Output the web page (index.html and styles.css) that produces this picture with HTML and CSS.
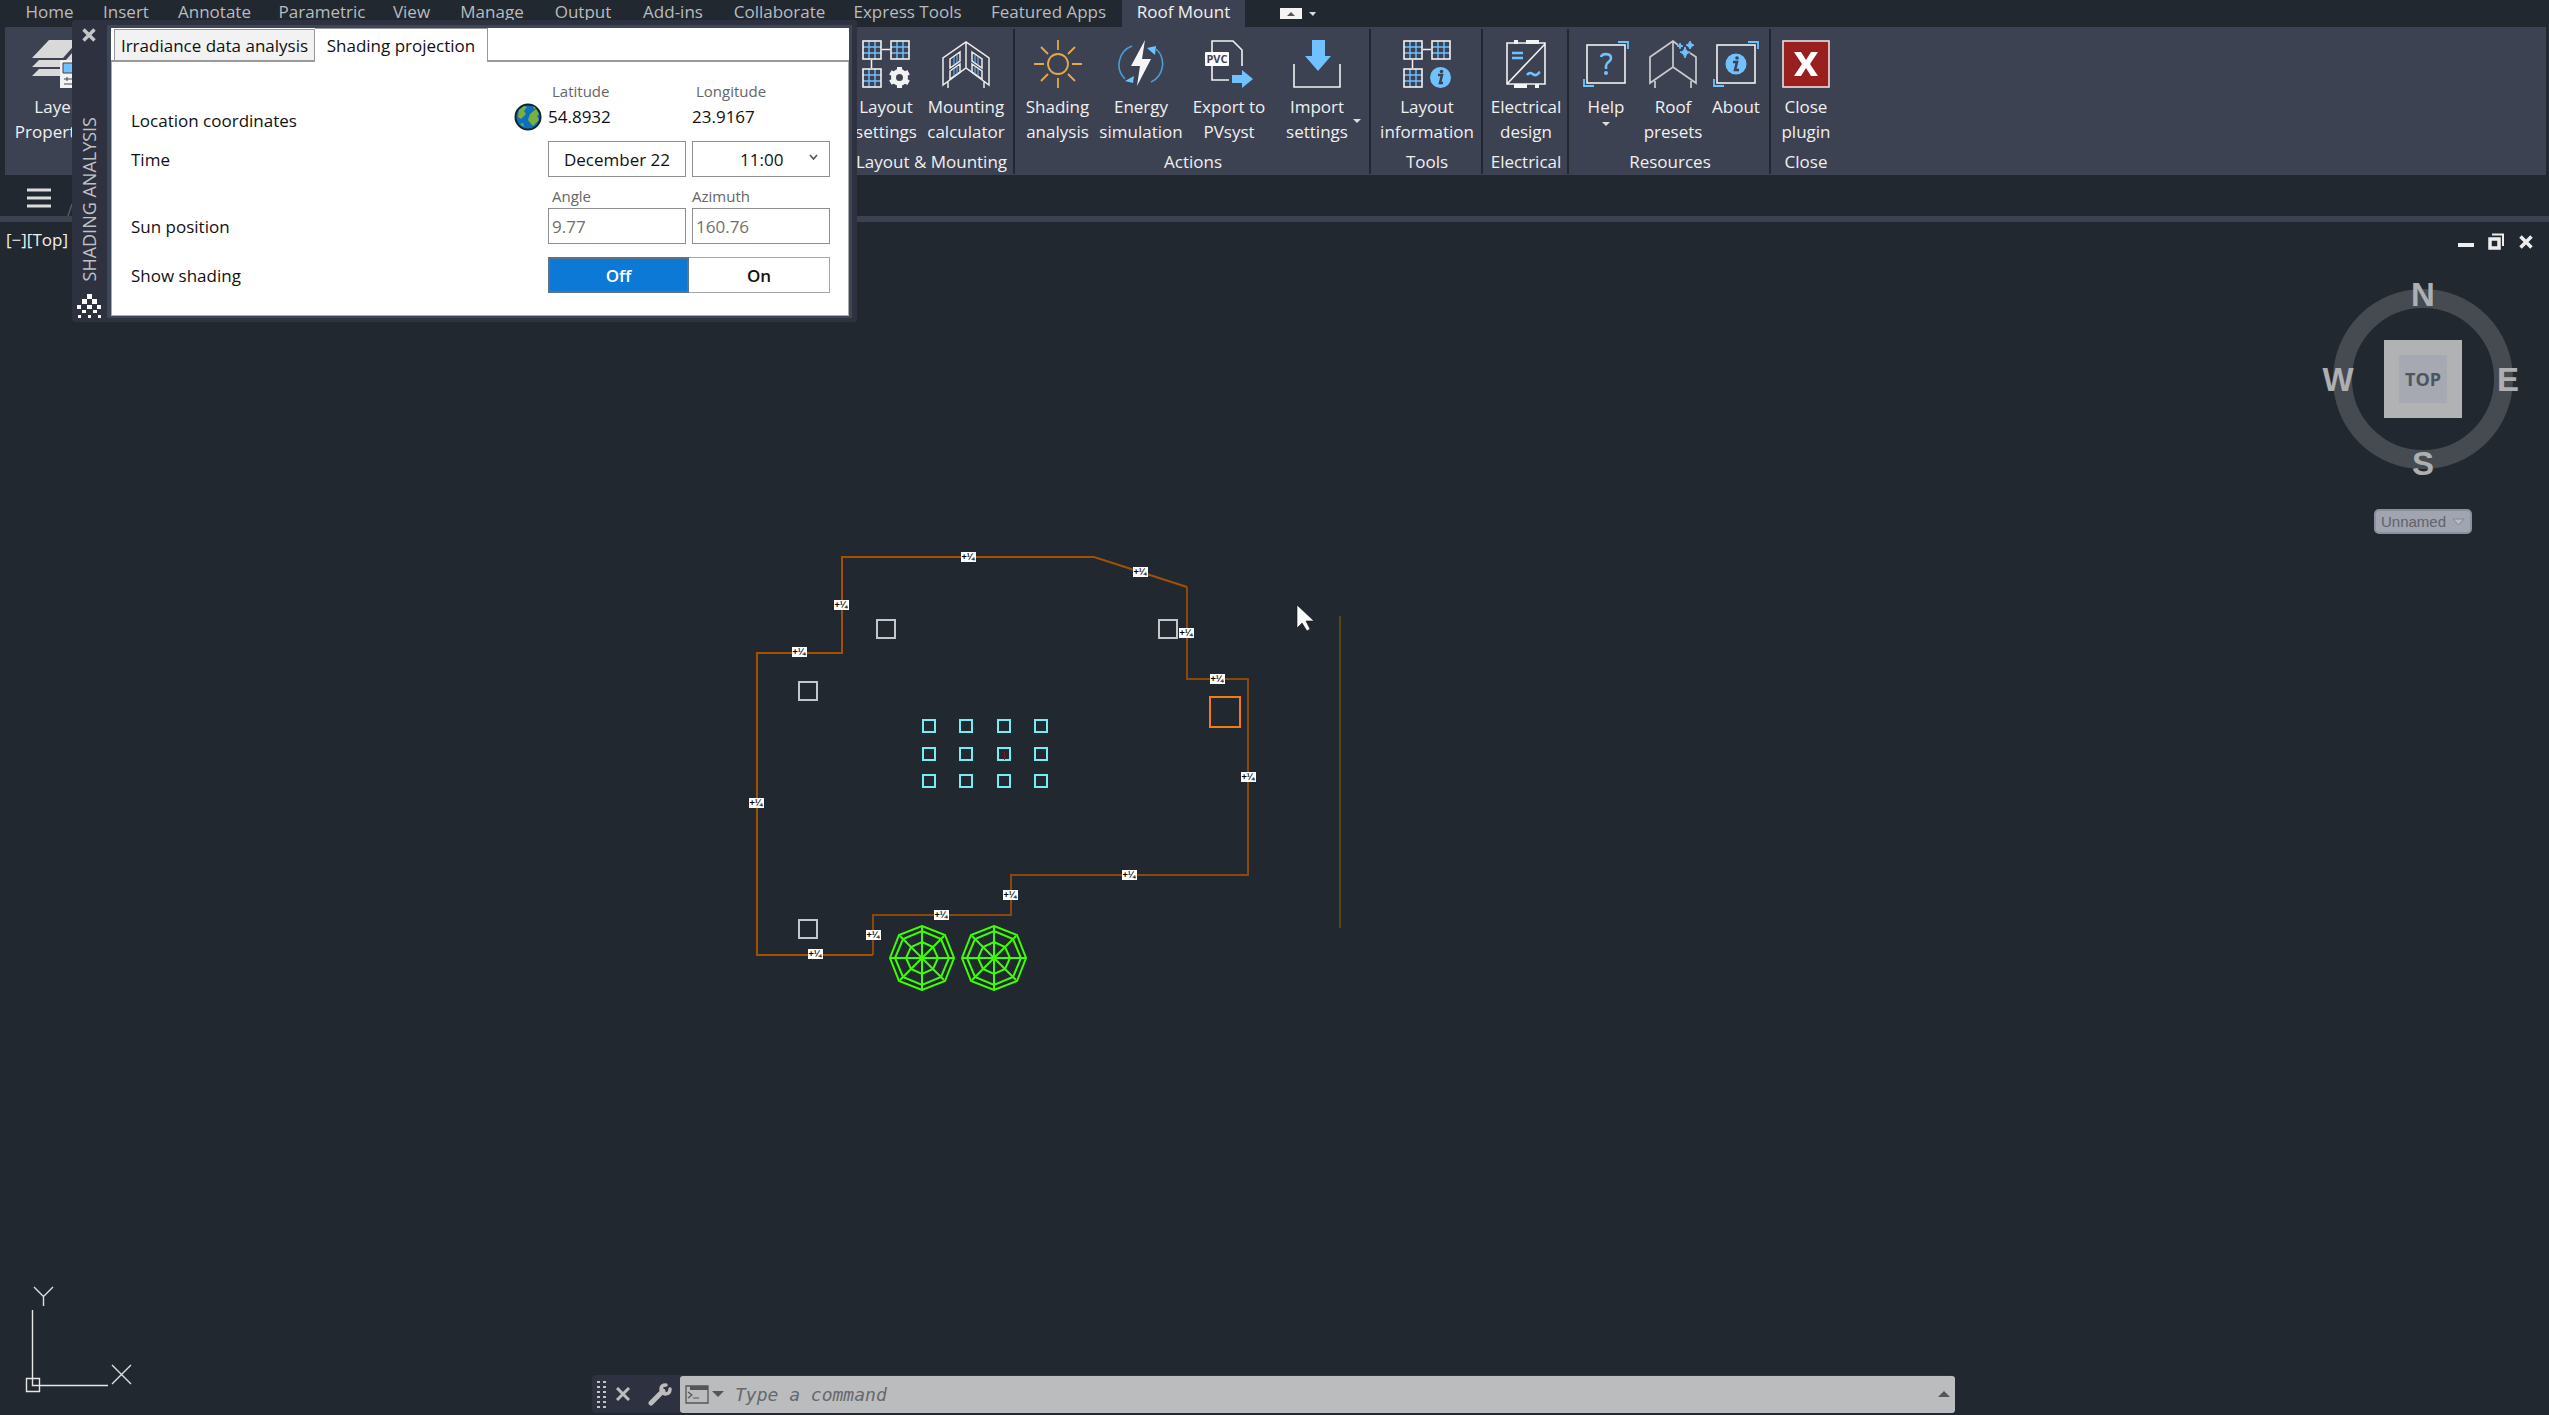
FILE: index.html
```html
<!DOCTYPE html>
<html lang="en">
<head>
<meta charset="utf-8">
<title>Shading analysis</title>
<link rel="stylesheet" href="styles.css">
</head>
<body>
<svg class="defs" width="0" height="0" aria-hidden="true">
  <symbol id="panel" viewBox="0 0 20 20">
    <path d="M7 1v18M13 1v18M1 7h18M1 13h18" stroke="#6fc1ff" stroke-width="1.4" fill="none"/>
    <rect x="1" y="1" width="18" height="18" fill="none" stroke="#f2f2f2" stroke-width="1.6"/>
  </symbol>
  <symbol id="tree" viewBox="-33 -33 66 66">
    <g fill="none" stroke="#3dff00" stroke-width="2">
      <path d="M0-32L23-23 32 0 23 23 0 32-23 23-32 0-23-23z"/>
      <path d="M0-27L19-19 27 0 19 19 0 27-19 19-27 0-19-19z"/>
      <path d="M0-16L11-11 16 0 11 11 0 16-11 11-16 0-11-11z"/>
      <path d="M0-32V32M-32 0H32M-22-22L22 22M-22 22L22-22"/>
    </g>
  </symbol>
</svg>

<nav class="tabs">
  <button>Home</button><button>Insert</button><button>Annotate</button><button>Parametric</button><button>View</button><button>Manage</button><button>Output</button><button>Add-ins</button><button>Collaborate</button><button>Express Tools</button><button>Featured Apps</button><button class="active">Roof Mount</button>
  <button class="minimize" aria-label="Minimize ribbon"><svg width="44" height="16" viewBox="0 0 44 16"><rect x="3" y="2" width="22" height="11" fill="#f4f4f4"/><path d="M10 10l4-4 4 4z" fill="#555"/><path d="M32 6h7l-3 4z" fill="#ddd"/></svg></button>
</nav>

<section class="ribbon">
  <div class="group layers">
    <div class="tools">
      <button class="tool"><svg width="48" height="48" viewBox="0 0 48 48"><g fill="#d9d9d9"><path d="M17 0h30L31 18H0z"/><path d="M7 20h27l13-15v10L31 27H0z"/><path d="M7 29h27l9-8v8l-12 7H0z"/></g><path d="M28 20h20v28H28z" fill="#f2f2f2"/><path d="M31 23h14v10H31z" fill="#6fc1ff" stroke="#3d4252"/><path d="M32 39h14M32 44h14M35 37v4" stroke="#444"/></svg><span>Layer<br>Properties</span></button>
    </div>
    <h2>&nbsp;</h2>
  </div>
  <div class="group mounting">
    <div class="tools">
      <button class="tool"><svg width="48" height="48" viewBox="0 0 48 48"><use href="#panel" width="20" height="20"/><use href="#panel" x="28" width="20" height="20"/><use href="#panel" y="28" width="20" height="20"/><path d="M20 9.500h8M9.500 20v8" stroke="#f2f2f2" stroke-width="1.500"/><circle cx="37.500" cy="37.500" r="6" fill="none" stroke="#f2f2f2" stroke-width="5"/><path d="M37.500 27v4M37.500 44v4M28.400 32.300l3.500 2M43 40.700l3.600 2M28.400 42.700l3.500-2M43 34.300l3.600-2" stroke="#f2f2f2" stroke-width="5"/></svg><span>Layout<br>settings</span></button>
      <button class="tool"><svg width="48" height="48" viewBox="0 0 48 48"><g fill="none" stroke="#ececec" stroke-width="1.500"><path d="M1 45V18L24 2l23 16v27L24 28zM24 2v26M6 42v6M42 42v6"/><path d="M8 19l10-7v9L8 28zM8 31l10-7v8L8 39zM30 12l10 7v9l-10-7zM30 24l10 7v8l-10-7z"/></g><path d="M12 17v8M15 15v8M12 29v7M15 27v7M33 15v8M36 17v8M33 27v7M36 29v7" stroke="#6fc1ff"/></svg><span>Mounting<br>calculator</span></button>
    </div>
    <h2>Layout &amp; Mounting</h2>
  </div>
  <div class="group actions">
    <div class="tools">
      <button class="tool"><svg width="48" height="48" viewBox="0 0 48 48"><g fill="none" stroke="#e5a84b" stroke-width="1.800"><circle cx="24" cy="24" r="10"/><path d="M24 0v10M24 38v10M0 24h10M38 24h10M7 7l7 7M34 34l7 7M7 41l7-7M34 14l7-7"/></g></svg><span>Shading<br>analysis</span></button>
      <button class="tool"><svg width="48" height="48" viewBox="0 0 48 48"><g fill="none" stroke="#4f9bd8" stroke-width="1.600"><path d="M15 6A20 20 0 0 0 8 39M34 42A20 20 0 0 0 39 9"/></g><path d="M30 8l9-2-1 9zM17 36l-1 7-8-2z" fill="#6fc1ff"/><path d="M28 0L14 26h9l-3 20 14-27h-9z" fill="#f5f5f5"/></svg><span>Energy<br>simulation</span></button>
      <button class="tool"><svg width="48" height="48" viewBox="0 0 48 48"><path d="M7 12V1h21l9 9v16M7 25v15h17" fill="none" stroke="#f2f2f2" stroke-width="1.600"/><rect y="12" width="24" height="14" rx="1" fill="#fff"/><text x="12" y="23" class="pvc">PVC</text><path d="M27 35h10v-5l11 9-11 9v-5H27z" fill="#6fc1ff"/></svg><span>Export to<br>PVsyst</span></button>
      <button class="tool more"><svg width="48" height="48" viewBox="0 0 48 48"><path d="M19 0h13v16h6L25 31 12 16h7z" fill="#6fc1ff"/><path d="M1 24v23h46V24" fill="none" stroke="#f2f2f2" stroke-width="1.600"/></svg><span>Import<br>settings</span><i class="caret"></i></button>
    </div>
    <h2>Actions</h2>
  </div>
  <div class="group info">
    <div class="tools">
      <button class="tool"><svg width="48" height="48" viewBox="0 0 48 48"><use href="#panel" width="20" height="20"/><use href="#panel" x="28" width="20" height="20"/><use href="#panel" y="28" width="20" height="20"/><path d="M20 9.500h8M9.500 20v8" stroke="#f2f2f2" stroke-width="1.500"/><circle cx="37.500" cy="37.500" r="10.500" fill="#6fc1ff"/><path d="M35 35h4l-2 8h3" fill="none" stroke="#3d4252" stroke-width="2.500"/><circle cx="38.500" cy="31.500" r="1.800" fill="#3d4252"/></svg><span>Layout<br>information</span></button>
    </div>
    <h2>Tools</h2>
  </div>
  <div class="group electrical">
    <div class="tools">
      <button class="tool"><svg width="48" height="48" viewBox="0 0 48 48"><path d="M12 0h4v4h-4zM24 0h13v4H24zM12 44h13v4H12zM33 44h4v4h-4z" fill="#f5f5f5"/><path d="M5 3h38v41H5zM5 44L43 4" fill="none" stroke="#f2f2f2" stroke-width="1.600"/><path d="M10 13h11M10 18h11" stroke="#6fc1ff" stroke-width="2.600"/><path d="M25 35c4-5 6 1 9 0s2-2 4-3" fill="none" stroke="#6fc1ff" stroke-width="2.600"/></svg><span>Electrical<br>design</span></button>
    </div>
    <h2>Electrical</h2>
  </div>
  <div class="group resources">
    <div class="tools">
      <button class="tool"><svg width="48" height="48" viewBox="0 0 48 48"><rect x="5" y="5" width="38" height="38" fill="none" stroke="#f2f2f2" stroke-width="1.600"/><path d="M36 2h10v7M2 39v7h10" fill="none" stroke="#6fc1ff" stroke-width="1.800"/><path d="M19 17c1-4 10-4 10 1 0 4-5 4-5 8v3" fill="none" stroke="#6fc1ff" stroke-width="2.600"/><circle cx="24" cy="33" r="2" fill="#6fc1ff"/></svg><span>Help</span><i class="caret"></i></button>
      <button class="tool"><svg width="48" height="48" viewBox="0 0 48 48"><path d="M29 5l-5-4L1 17v26l23-16 23 16V17l-6-4M24 1v26M6 41v7M42 41v7" fill="none" stroke="#c9cacd" stroke-width="1.700"/><path d="M36 7q1 5 5 5-4 1-5 6-1-5-5-6 4 0 5-5zM41 1q1 4 4 4-3 1-4 4-1-3-4-4 3 0 4-4zM31 3q0 3 3 3-3 0-3 3 0-3-3-3 3 0 3-3z" fill="#6fc1ff" stroke="#6fc1ff"/></svg><span>Roof<br>presets</span></button>
      <button class="tool"><svg width="48" height="48" viewBox="0 0 48 48"><rect x="5" y="5" width="38" height="38" fill="none" stroke="#f2f2f2" stroke-width="1.600"/><path d="M36 2h10v7M2 39v7h10" fill="none" stroke="#6fc1ff" stroke-width="1.800"/><circle cx="24" cy="24" r="10.500" fill="#6fc1ff"/><path d="M21 22h4l-2 8h4" fill="none" stroke="#3d4252" stroke-width="2.500"/><circle cx="25" cy="18" r="1.800" fill="#3d4252"/></svg><span>About</span></button>
    </div>
    <h2>Resources</h2>
  </div>
  <div class="group close">
    <div class="tools">
      <button class="tool"><svg width="48" height="48" viewBox="0 0 48 48"><rect x="1" y="1" width="46" height="46" fill="#9a1f1f" stroke="#eee" stroke-width="1.500"/><path d="M12 12h7l5 8 5-8h7l-8 12 8 12h-7l-5-8-5 8h-7l8-12z" fill="#fff"/></svg><span>Close<br>plugin</span></button>
    </div>
    <h2>Close</h2>
  </div>
</section>

<div class="filebar"><button aria-label="Menu"><svg width="24" height="20" viewBox="0 0 24 20"><path d="M0 2h24M0 10h24M0 18h24" stroke="#dcdcdc" stroke-width="3"/></svg></button><svg width="6" height="12" viewBox="0 0 6 12"><path d="M1 12L5 0" stroke="#555b66" stroke-width="1.500"/></svg></div>

<main class="viewport">
  <div class="view-head">
    <div class="view-label">[−][Top]</div>
    <div class="window-buttons">
      <button aria-label="Minimize"><svg width="17" height="18" viewBox="0 0 17 18"><path d="M0 10h16v4H0z" fill="#eee"/></svg></button>
      <button aria-label="Restore"><svg width="17" height="18" viewBox="0 0 17 18"><path d="M4 1.500h11V13" fill="none" stroke="#eee" stroke-width="2"/><path d="M2 6h9v9H2z" fill="none" stroke="#eee" stroke-width="3.500"/></svg></button>
      <button aria-label="Close"><svg width="17" height="18" viewBox="0 0 17 18"><path d="M2.500 3.500l11 11M13.500 3.500l-11 11" stroke="#eee" stroke-width="3.500"/></svg></button>
    </div>
  </div>

  <div class="viewcube">
    <div class="compass">
      <svg width="180" height="180" viewBox="0 0 180 180"><circle cx="90" cy="90" r="80.500" fill="none" stroke="#464a51" stroke-width="19"/></svg>
      <span class="n">N</span><span class="e">E</span><span class="s">S</span><span class="w">W</span>
      <button class="cube"><span>TOP</span></button>
    </div>
    <button class="ucs-name">Unnamed <svg width="13" height="8" viewBox="0 0 13 8"><path d="M1 1h11L6.500 7z" fill="#b9bbc4" stroke="#85878f"/></svg></button>
  </div>

  <svg class="drawing" width="640" height="480" viewBox="730 530 640 480">
    <g fill="none" shape-rendering="crispEdges">
      <path d="M1187 587V679H1248V875H1011V915H873V955" stroke="#8a4710" stroke-width="2"/>
      <path d="M873 955H757V653H842V557H1094" stroke="#a35100" stroke-width="2"/>
      <path d="M1340 616V928" stroke="#5c4514" stroke-width="2"/>
      <g stroke="#c4c6c9" stroke-width="2"><path d="M877 620h18v18h-18zM1159 620h18v18h-18zM799 682h18v18h-18zM799 920h18v18h-18z"/></g>
      <path d="M1210 697h30v30h-30z" stroke="#f07c14" stroke-width="2"/>
      <g stroke="#74eef2" stroke-width="2"><path d="M923 720h12v12h-12zM960 720h12v12h-12zM998 720h12v12h-12zM1035 720h12v12h-12z"/><path d="M923 748h12v12h-12zM960 748h12v12h-12zM998 748h12v12h-12zM1035 748h12v12h-12z"/><path d="M923 775h12v12h-12zM960 775h12v12h-12zM998 775h12v12h-12zM1035 775h12v12h-12z"/></g>
      <path d="M1004 752v8" stroke="#7a1c22"/>
    </g>
    <path d="M1094 557L1187 587" stroke="#a35100" stroke-width="2"/>
    <use href="#tree" x="889" y="925" width="66" height="66"/><use href="#tree" x="961" y="925" width="66" height="66"/>
    <path d="M961 552h15v10h-15zM1133 567h15v10h-15zM834 600h15v10h-15zM792 647h15v10h-15zM1179 628h15v10h-15zM1210 674h15v10h-15zM749 798h15v10h-15zM1241 772h15v10h-15zM1122 870h15v10h-15zM1003 890h15v10h-15zM934 910h15v10h-15zM866 930h15v10h-15zM808 949h15v10h-15z" fill="#fff"/>
    <g class="edge-text">
      <text x="968" y="560">+¼</text><text x="1140" y="575">+¼</text><text x="841" y="608">+¼</text><text x="799" y="655">+¼</text><text x="1186" y="636">+¼</text><text x="1217" y="682">+¼</text><text x="756" y="806">+¼</text><text x="1248" y="780">+¼</text><text x="1129" y="878">+¼</text><text x="1010" y="898">+¼</text><text x="941" y="918">+¼</text><text x="873" y="938">+¼</text><text x="815" y="957">+¼</text>
    </g>
    <path d="M1297 605v23l5-5 5 8 3-2-4-8h8z" fill="#fff" stroke="#111" stroke-width=".6"/>
  </svg>

  <svg class="axes" width="120" height="110" viewBox="20 1284 120 110"><path d="M32.500 1310V1385.500H108M26.500 1378.500h13v13h-13z" fill="none" stroke="#e6e6e6" stroke-width="1.400"/><path d="M34 1287l9.500 9.500 9.500-9.500M43.500 1296.500v9.500M112 1365l19 19M131 1365l-19 19" fill="none" stroke="#e0e0e0" stroke-width="1.400"/></svg>

  <form class="command">
    <div class="command-tools">
      <svg width="10" height="28" viewBox="0 0 10 28"><path d="M1.500 1v27M7.500 1v27" stroke="#c4c4c4" stroke-width="3" stroke-dasharray="2 3"/></svg>
      <button type="button" aria-label="Close"><svg width="14" height="14" viewBox="0 0 14 14"><path d="M1 1l12 12M13 1L1 13" stroke="#bdbdbd" stroke-width="3"/></svg></button>
      <button type="button" aria-label="Customize"><svg width="24" height="24" viewBox="0 0 24 24"><path d="M3 21L15 9" stroke="#bdbdbd" stroke-width="5" stroke-linecap="round"/><path d="M18 3q-5 0-5 4t4 5q5 0 5-5" fill="none" stroke="#bdbdbd" stroke-width="3.500" stroke-linecap="round"/></svg></button>
    </div>
    <div class="command-field">
      <button type="button" aria-label="Recent commands"><svg width="40" height="20" viewBox="0 0 40 20"><path d="M1 1h22v17H1z" fill="none" stroke="#555" stroke-width="1.300"/><path d="M5 1h18v4H5z" fill="#555"/><path d="M3 7l4 3-4 3M8 13h6" fill="none" stroke="#555" stroke-width="1.200"/><path d="M27 6h12l-6 6z" fill="#555"/></svg></button>
      <input type="text" placeholder="Type a command" aria-label="Command">
      <button type="button" aria-label="Expand history"><svg width="12" height="7" viewBox="0 0 12 7"><path d="M0 6h12L6 0z" fill="#555"/></svg></button>
    </div>
  </form>
</main>

<aside class="palette">
  <div class="grip">
    <button aria-label="Close palette"><svg width="14" height="14" viewBox="0 0 14 14"><path d="M1.500 1.500l11 11M12.500 1.500l-11 11" stroke="#c4c5c9" stroke-width="3.500"/></svg></button>
    <span class="grip-title">SHADING ANALYSIS</span>
    <svg width="24" height="24" viewBox="0 0 24 24"><path d="M10 0h5v5h-5zM5 5h5v5H5zM15 5h5v5h-5zM0 11h4v4H0zM10 11h5v4h-5zM20 11h4v4h-4zM5 16h4v3H5zM16 16h4v3h-4zM1 21h3v3H1zM11 21h3v3h-3zM21 21h3v3h-3z" fill="#fff"/></svg>
  </div>
  <div class="content">
    <div class="content-tabs"><button>Irradiance data analysis</button><button class="active">Shading projection</button></div>
    <form class="fields">
      <div class="row caption"><span></span><span>Latitude</span><span>Longitude</span></div>
      <div class="row place"><span>Location coordinates</span>
        <span class="coord"><svg class="globe" width="28" height="28" viewBox="0 0 28 28"><circle cx="14" cy="14" r="12.500" fill="#0d6fc0" stroke="#14222e" stroke-width="2"/><path d="M5 7l5-4 3 1-3 4 2 3-5 5-3-2zM16 11l6-5 3 5-2 2 2 4-6 6-5-6zM19 3l3 2-2 1zM6 21l3-1 1 4z" fill="#7cb03c"/></svg>54.8932</span><span>23.9167</span></div>
      <div class="row box"><label for="date">Time</label><input id="date" class="date" type="text" value="December 22">
        <span class="select"><select aria-label="Hour"><option>11:00</option></select><svg width="9" height="7" viewBox="0 0 9 7"><path d="M1 1l3.500 4L8 1" fill="none" stroke="#555" stroke-width="1.600"/></svg></span></div>
      <div class="row caption sun"><span></span><label for="angle">Angle</label><label for="azimuth" class="azimuth">Azimuth</label></div>
      <div class="row box"><span>Sun position</span><input id="angle" type="text" value="9.77" readonly><input id="azimuth" type="text" value="160.76" readonly></div>
      <div class="row box toggle"><span>Show shading</span><span class="switch"><button type="button" class="on">Off</button><button type="button">On</button></span></div>
    </form>
  </div>
</aside>
</body>
</html>
```
FILE: styles.css
```css
* { box-sizing: border-box; }
body {
  margin: 0;
  min-height: 100vh;
  display: flex;
  flex-direction: column;
  position: relative;
  overflow-x: hidden;
  background: #212830;
  color: #f0f0f0;
  font: 17px/25px "Open Sans", "Noto Sans", sans-serif;
}
button, input, select { font: inherit; color: inherit; }
button { border: 0; padding: 0; background: none; }
svg { display: block; flex: none; }
.defs { position: absolute; }

/* Ribbon tabs */
.tabs {
  display: grid;
  grid-template-columns: 79px 74px 103px 112px 67px 94px 88px 92px 121px 135px 147px 123px 100px;
  padding-left: 10px;
  height: 27px;
}
.tabs button { color: #b9bbbf; white-space: nowrap; line-height: 24px; padding-bottom: 3px; }
.tabs .active { background: #3d4252; color: #f0f0f0; }
.tabs .minimize { padding: 0 0 0 32px; }

/* Ribbon */
.ribbon {
  display: grid;
  grid-template-columns: 843px 167px 356px 112px 86px 202px 1fr;
  margin: 0 3px 0 5px;
  height: 148px;
  background: #3d4252;
}
.group { display: flex; flex-direction: column; position: relative; }
.group + .group::after {
  content: "";
  position: absolute;
  right: 0;
  top: 2px;
  bottom: 1px;
  width: 2px;
  background: #212830;
}
.ribbon .close::after { display: none; }
.tools { display: grid; padding-top: 13px; height: 123px; }
.layers .tools { grid-template-columns: 102px; }
.mounting .tools { grid-template-columns: 76px 84px; }
.actions .tools { grid-template-columns: 85px 82px 94px 82px; }
.info .tools, .electrical .tools { grid-template-columns: 1fr; }
.resources .tools { grid-template-columns: 74px 60px 66px; }
.close .tools { grid-template-columns: 70px; }
.tool {
  display: flex;
  flex-direction: column;
  align-items: center;
  position: relative;
  white-space: nowrap;
}
.tool span { margin-top: 6px; }
.caret {
  border: 4px solid transparent;
  border-top-color: #ddd;
  border-bottom: 0;
  margin-top: 3px;
}
.more .caret { position: absolute; right: -3px; top: 76px; }
.group h2 {
  margin: 0;
  font: inherit;
  line-height: 24px;
  text-align: center;
}
.mounting h2 { white-space: nowrap; }
.close h2 { width: 70px; }

.filebar {
  display: flex;
  align-items: flex-start;
  gap: 16px;
  height: 47px;
  padding: 13px 27px;
  border-bottom: 6px solid #3d4252;
}
.filebar > svg { margin-top: 16px; }

/* Drawing area */
.viewport { flex: 1; position: relative; }
.view-head { display: flex; justify-content: space-between; padding: 5px 14px 0 6px; }
.window-buttons { display: flex; gap: 13px; padding-top: 5px; }
.viewcube {
  position: absolute;
  top: 67px;
  right: 36px;
  width: 180px;
  display: flex;
  flex-direction: column;
  align-items: center;
}
.compass { position: relative; }
.compass > span {
  position: absolute;
  width: 36px;
  text-align: center;
  font: bold 33px/36px "Liberation Sans", Arial, sans-serif;
  color: #aeafb1;
}
.compass .n { left: 72px; top: -12px; }
.compass .s { left: 72px; top: 157px; }
.compass .w { left: -13px; top: 73px; }
.compass .e { right: -13px; top: 73px; }
.cube {
  position: absolute;
  left: 51px;
  top: 51px;
  width: 78px;
  height: 78px;
  padding: 15px;
  background: #b1b2b4;
}
.cube span {
  display: block;
  line-height: 48px;
  background: #a6a9b1;
  color: #4d5560;
  font-size: 18px;
  font-weight: 700;
}
.ucs-name {
  display: flex;
  align-items: center;
  justify-content: center;
  gap: 6px;
  width: 98px;
  height: 25px;
  margin-top: 40px;
  border: 2px solid #8c8f9c;
  border-radius: 5px;
  background: #a1a4b1;
  color: #60636c;
  font: 15px/20px "Liberation Sans", Arial, sans-serif;
}
.drawing { position: absolute; left: 730px; top: 308px; }
.edge-text { font: bold 9px "Liberation Sans", Arial, sans-serif; text-anchor: middle; fill: #000; }
.pvc { font: bold 11px "Open Sans", sans-serif; text-anchor: middle; fill: #3d4252; }
.axes { position: absolute; left: 20px; bottom: 21px; }

/* Command line */
.command {
  position: absolute;
  left: 592px;
  right: 594px;
  bottom: 2px;
  height: 38px;
  display: flex;
  border-radius: 4px;
  background: #2d3140;
}
.command-tools { display: flex; align-items: center; gap: 9px; width: 88px; padding-left: 5px; }
.command-tools button + button { margin-left: 9px; }
.command-field {
  flex: 1;
  display: flex;
  align-items: center;
  padding: 0 5px;
  margin-top: 1px;
  border-radius: 3px;
  background: #bbbcbe;
}
.command-field input {
  flex: 1;
  border: 0;
  padding: 0 10px;
  background: none;
  font: italic 18px/24px "DejaVu Sans Mono", monospace;
}
.command-field input::placeholder { color: #66686b; opacity: 1; }

/* Floating palette */
.palette {
  position: absolute;
  left: 72px;
  top: 20px;
  width: 785px;
  height: 302px;
  display: flex;
  padding: 5px 5px 4px 0;
  background: #2d3140;
  border-radius: 3px;
}
.grip {
  width: 35px;
  display: flex;
  flex-direction: column;
  align-items: center;
  justify-content: space-between;
  padding: 3px 1px 0 0;
}
.grip-title {
  writing-mode: vertical-rl;
  transform: rotate(180deg);
  color: #c0c1c5;
  font-size: 18px;
  margin-top: 62px;
}
.content {
  flex: 1;
  border: 3px solid #3d4758;
  border-left-width: 4px;
  background: #fff;
  color: #111;
}
.content-tabs { display: flex; align-items: flex-end; height: 34px; padding-left: 3px; border-bottom: 2px solid #999; }
.content-tabs button {
  width: 201px;
  height: 31px;
  line-height: 29px;
  background: #f2f2f2;
  border: 1px solid #999;
  border-bottom: 0;
  white-space: nowrap;
}
.content-tabs .active { width: 173px; height: 34px; line-height: 31px; margin-bottom: -2px; background: #fff; border-left: 0; }
.fields {
  padding: 19px 18px 0 19px;
  height: 254px;
  border: 1px solid #aaa;
  border-top: 0;
}
.row { display: grid; grid-template-columns: 1fr 138px 138px; column-gap: 6px; align-items: center; }
.caption { height: 20px; font-size: 15px; line-height: 20px; color: #666; }
.caption > * { padding-left: 4px; }
.caption .azimuth { padding-left: 0; }
.place { height: 40px; align-items: start; line-height: 31px; }
.place > :first-child { line-height: 39px; }
.coord { position: relative; }
.globe { position: absolute; left: -34px; top: 2px; }
.box { height: 36px; }
.sun { margin: 9px 0 2px; }
.toggle { margin-top: 13px; }
.box input, .box select {
  width: 100%;
  height: 36px;
  padding: 0 3px;
  border: 1px solid #8f8f8f;
  border-radius: 0;
  background: #fff;
  color: #707070;
}
.box .date { color: #111; text-align: center; }
.select { position: relative; }
.box select { appearance: none; padding-left: 47px; color: #111; }
.select svg { position: absolute; right: 12px; top: 13px; }
.switch { grid-column: 2 / 4; display: grid; grid-template-columns: 1fr 1fr; }
.switch button { height: 36px; border: 1px solid #a6a6a6; border-left: 0; background: #fff; font-weight: 600; }
.switch .on { border: 2px solid #5f7387; background: #0c79d6; color: #fff; }
```
